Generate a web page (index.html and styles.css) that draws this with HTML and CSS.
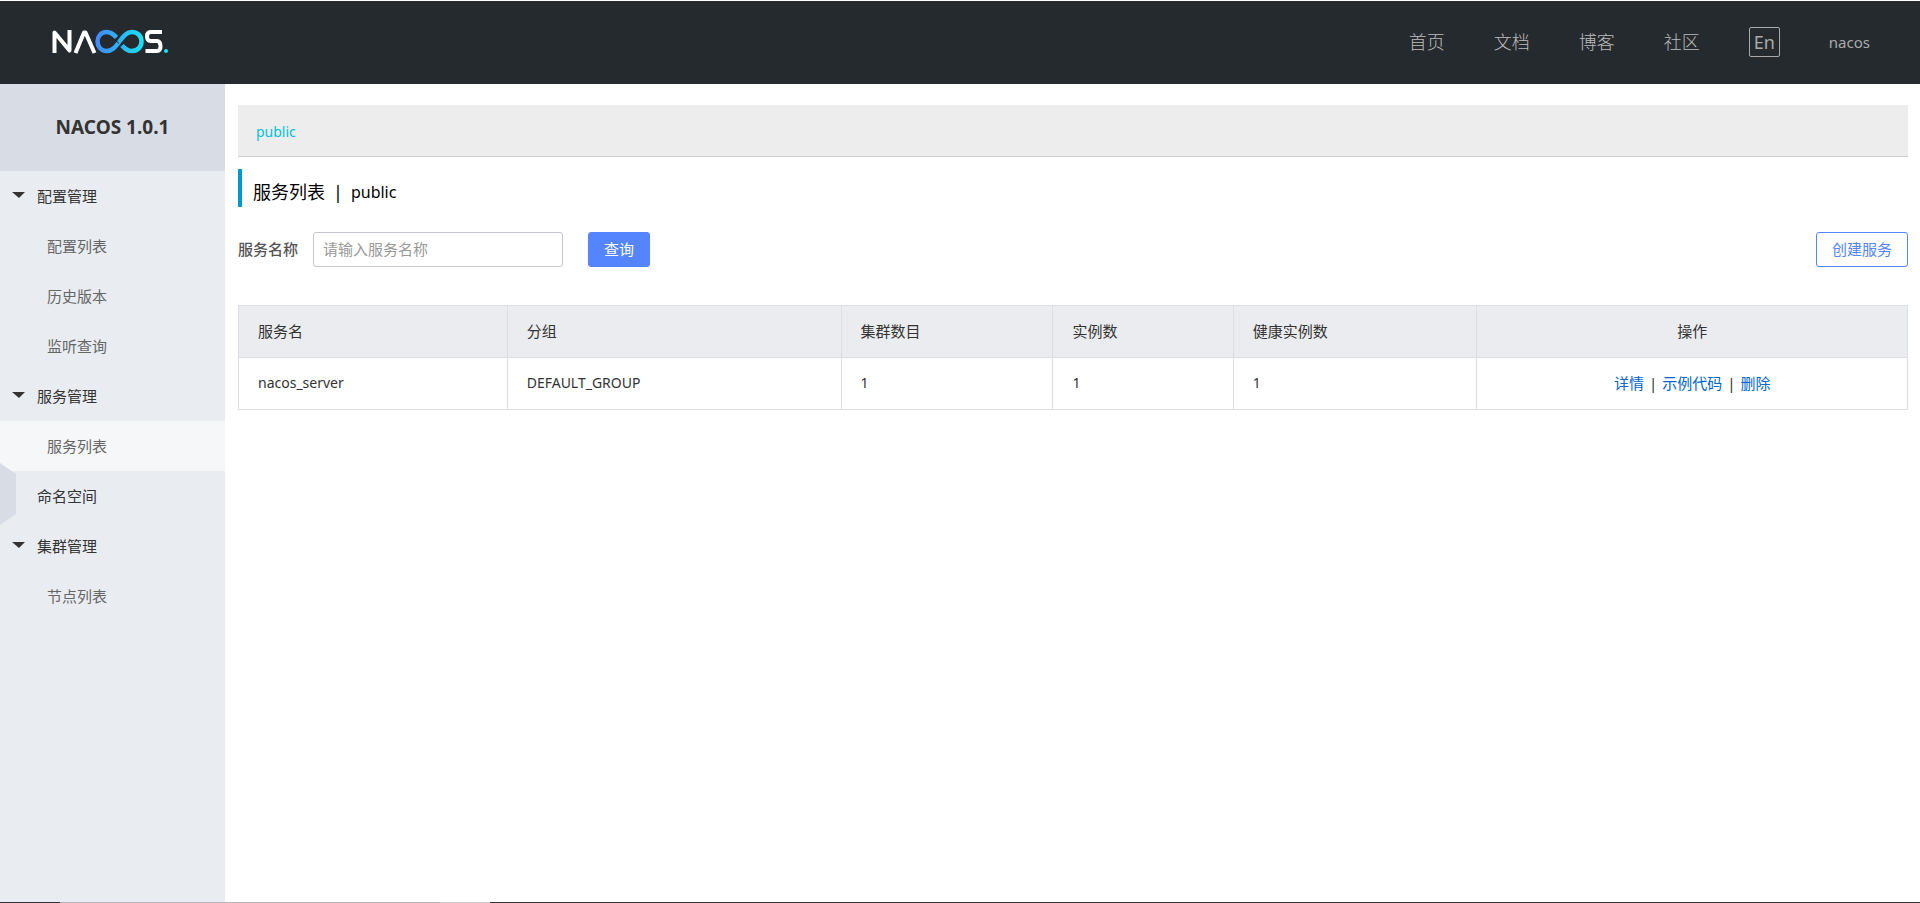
FILE: index.html
```html
<!DOCTYPE html>
<html lang="zh-CN">
<head>
<meta charset="utf-8">
<title>Nacos</title>
<link rel="stylesheet" href="styles.css">
</head>
<body>
<div class="app">
  <header class="header">
    <a class="logo" href="#" aria-label="Nacos">
      <svg width="118" height="26" viewBox="0 0 118 26" fill="none">
        <defs>
          <linearGradient id="loop" gradientUnits="userSpaceOnUse" x1="43" y1="0" x2="92" y2="0">
            <stop offset="0" stop-color="#4385ff"/>
            <stop offset="1" stop-color="#17e4f5"/>
          </linearGradient>
        </defs>
        <path d="M2.500 24V3.500L17.500 21.500V1" stroke="#fff" stroke-width="4" stroke-linejoin="round"/>
        <path d="M23.500 24L32 3.500H33.500L42.500 24" stroke="#fff" stroke-width="4" stroke-linejoin="round"/>
        <path d="M64.500 8.500C61 4.500 58 3 54.500 3C49 3 45.500 7.500 45.500 12.500C45.500 17.500 49 22 54.500 22C60 22 63 18.500 67.500 12.500C72 6.500 75 3 80 3C86 3 89.500 7.500 89.500 12.500C89.500 17.500 86 22 80 22C76 22 73 20 70 16.500" stroke="url(#loop)" stroke-width="4.500"/>
        <path d="M63 11L67 14.500" stroke="#252a2f" stroke-width="1"/>
        <path d="M110 3H98.500Q95 3 95 7.500Q95 12 98.500 12H105Q108.500 12 108.500 17.500Q108.500 22 105 22H93.500" stroke="#fff" stroke-width="4"/>
        <circle cx="114" cy="22" r="2" fill="#17e4f5"/>
      </svg>
    </a>
    <nav class="nav">
      <a href="#">首页</a>
      <a href="#">文档</a>
      <a href="#">博客</a>
      <a href="#">社区</a>
      <button class="lang" type="button">En</button>
      <a class="user" href="#">nacos</a>
    </nav>
  </header>
  <div class="body">
    <aside class="sidebar">
      <h1 class="version">NACOS 1.0.1</h1>
      <nav class="menu">
        <a class="group" href="#"><i class="caret"></i>配置管理</a>
        <a class="item" href="#">配置列表</a>
        <a class="item" href="#">历史版本</a>
        <a class="item" href="#">监听查询</a>
        <a class="group" href="#"><i class="caret"></i>服务管理</a>
        <a class="item active" href="#">服务列表</a>
        <a class="group plain" href="#">命名空间</a>
        <a class="group" href="#"><i class="caret"></i>集群管理</a>
        <a class="item" href="#">节点列表</a>
      </nav>
      <button class="fold" type="button" aria-label="收起菜单"></button>
    </aside>
    <main class="main">
      <div class="namespace"><a href="#">public</a></div>
      <h2 class="title"><span>服务列表</span><span>|</span><span class="current">public</span></h2>
      <form class="search">
        <label for="service-name">服务名称</label>
        <input id="service-name" type="text" placeholder="请输入服务名称">
        <button class="btn primary" type="button">查询</button>
        <button class="btn create" type="button">创建服务</button>
      </form>
      <table class="table">
        <colgroup>
          <col class="c-name"><col class="c-group"><col class="c-cluster"><col class="c-count"><col class="c-healthy"><col class="c-action">
        </colgroup>
        <thead>
          <tr><th>服务名</th><th>分组</th><th>集群数目</th><th>实例数</th><th>健康实例数</th><th class="action">操作</th></tr>
        </thead>
        <tbody>
          <tr>
            <td>nacos_server</td><td>DEFAULT_GROUP</td><td>1</td><td>1</td><td>1</td>
            <td class="action"><a href="#">详情</a><span class="sep">|</span><a href="#">示例代码</a><span class="sep">|</span><a href="#">删除</a></td>
          </tr>
        </tbody>
      </table>
    </main>
  </div>
  <div class="edge"></div>
</div>
</body>
</html>
```
FILE: styles.css
```css
* { box-sizing: border-box; }

body {
  margin: 0;
  font: 15px/20px "Noto Sans", "Noto Sans CJK SC", sans-serif;
  color: #333;
  background: #fff;
}

a { color: inherit; text-decoration: none; }
button, input { font: inherit; margin: 0; }

.app {
  display: flex;
  flex-direction: column;
  min-height: 100vh;
  padding-top: 1px;
}

.header {
  display: flex;
  align-items: center;
  justify-content: space-between;
  height: 83px;
  padding: 0 50px 2px 52px;
  background: #252a2f;
}
.logo svg { display: block; }

.nav {
  display: flex;
  align-items: center;
  gap: 49px;
  font-size: 18px;
  font-weight: 300;
  color: #bbb;
}
.nav .user { font-size: 15px; font-weight: 400; color: #aaa; }
.lang {
  width: 31px;
  height: 30px;
  padding: 0;
  border: 1px solid #aaa;
  border-radius: 2px;
  background: none;
  color: #aaa;
  font-weight: 400;
  line-height: 26px;
}

.body { display: flex; flex: 1; }

.sidebar {
  position: relative;
  flex: 0 0 225px;
  background: #e9edf2;
}
.version {
  margin: 0;
  padding: 30px 0;
  font-size: 19px;
  line-height: 27px;
  text-align: center;
  background: #d8dde5;
}
.menu a { display: flex; align-items: center; height: 50px; }
.menu .group { padding-left: 12px; }
.menu .plain { padding-left: 37px; }
.menu .item { padding-left: 47px; color: #666; }
.menu .active { background: #f5f7f9; }
.caret {
  margin: 0 12px 2px 0;
  border: 6px solid transparent;
  border-width: 6px 6px 0 7px;
  border-top-color: #333;
}
.fold {
  position: absolute;
  left: 0;
  top: 379px;
  width: 16px;
  height: 62px;
  padding: 0;
  border: 0;
  background: #d8dde5;
  clip-path: polygon(0 0, 100% 11px, 100% 51px, 0 100%);
}

.main { flex: 1; min-width: 0; padding: 21px 12px 0 13px; }

.namespace {
  padding: 17px 18px 14px;
  border-bottom: 1px solid #ccc;
  background: #ededed;
  color: #00c1de;
  font-size: 14px;
}
.title {
  display: flex;
  gap: 8px;
  margin: 12px 0 25px;
  padding: 9px 0 1px 11px;
  border-left: 4px solid #09c;
  font-size: 18px;
  font-weight: 400;
  line-height: 28px;
  color: #000;
}
.title .current { font-size: 16px; }

.search { display: flex; align-items: center; margin-bottom: 38px; }
.search label { padding-bottom: 2px; color: #555; font-weight: 500; }
.search input {
  width: 250px;
  height: 35px;
  margin: 0 25px 0 15px;
  padding: 0 9px 2px;
  border: 1px solid #c4c6cf;
  border-radius: 3px;
}
.search input::placeholder { color: #999; }
.btn {
  height: 35px;
  padding: 0 15px 2px;
  border: 1px solid #5584ff;
  border-radius: 3px;
  background: #fff;
  color: #5584ff;
}
.primary { background: #5584ff; color: #fff; }
.create { margin-left: auto; }

.table {
  width: 100%;
  table-layout: fixed;
  border-collapse: collapse;
}
.table th, .table td {
  height: 52px;
  padding: 0 19px 2px;
  border: 1px solid #dcdee3;
  font-weight: 400;
  text-align: left;
}
.table td { font-size: 14px; }
.table th { background: #ebecf0; }
.table .action { font-size: 15px; text-align: center; }
.table a { color: #06c; }
.sep { margin: 0 5px; }
.c-name { width: 16.1%; }
.c-group { width: 20%; }
.c-cluster { width: 12.7%; }
.c-count { width: 10.8%; }
.c-healthy { width: 14.6%; }

.edge {
  height: 1px;
  background: linear-gradient(90deg, #333 60px, #b5b5b5 60px 440px, #ccc 440px 490px, #333 490px);
}
```
